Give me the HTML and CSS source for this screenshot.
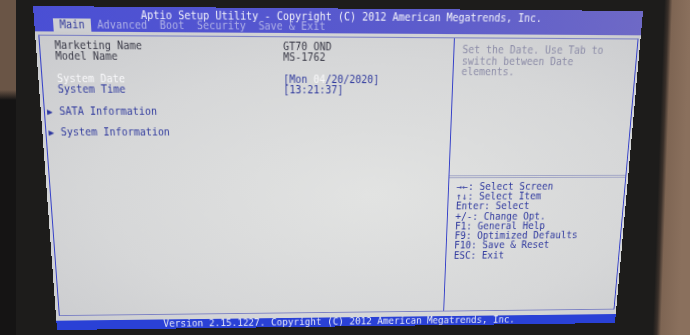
FILE: index.html
```html
<!DOCTYPE html>
<html lang="en">
<head>
    <meta charset="UTF-8">
    <meta name="viewport" content="width=device-width, initial-scale=1.0">
    <title>Aptio Setup Utility</title>
    <link rel="stylesheet" href="styles.css">
</head>
<body>
    <div class="screen">
        <header class="topbar">
            <div class="title">Aptio Setup Utility - Copyright (C) 2012 American Megatrends, Inc.</div>
            <nav class="tabs">
                <span class="tab active">Main</span>
                <span class="tab">Advanced</span>
                <span class="tab">Boot</span>
                <span class="tab">Security</span>
                <span class="tab">Save &amp; Exit</span>
            </nav>
        </header>
        <main class="panel">
            <div class="frame">
                <section class="items">
                    <div class="row dark"><span class="arrow"></span><span>Marketing Name</span><span>GT70 OND</span></div>
                    <div class="row dark"><span class="arrow"></span><span>Model Name</span><span>MS-1762</span></div>
                    <div class="row"></div>
                    <div class="row"><span class="arrow"></span><span class="selected">System Date</span><span>[Mon <span class="selected">04</span>/20/2020]</span></div>
                    <div class="row"><span class="arrow"></span><span>System Time</span><span>[13:21:37]</span></div>
                    <div class="row"></div>
                    <div class="row"><span class="arrow">▶</span><span>SATA Information</span></div>
                    <div class="row"></div>
                    <div class="row"><span class="arrow">▶</span><span>System Information</span></div>
                </section>
                <aside class="help">
                    <div class="help-text">
                        <div>Set the Date. Use Tab to</div>
                        <div>switch between Date</div>
                        <div>elements.</div>
                    </div>
                    <div class="keys">
                        <div>→←: Select Screen</div>
                        <div>↑↓: Select Item</div>
                        <div>Enter: Select</div>
                        <div>+/-: Change Opt.</div>
                        <div>F1: General Help</div>
                        <div>F9: Optimized Defaults</div>
                        <div>F10: Save &amp; Reset</div>
                        <div>ESC: Exit</div>
                    </div>
                </aside>
            </div>
        </main>
        <footer class="footer">Version 2.15.1227. Copyright (C) 2012 American Megatrends, Inc.</footer>
    </div>
</body>
</html>
```

FILE: styles.css
```css
body {
    margin: 0;
    width: 690px;
    height: 335px;
    overflow: hidden;
    background:
        linear-gradient(92deg, transparent 0 664px, #3a302a 668px, #7e6553 672px, #8a705d 690px),
        linear-gradient(to bottom, #6a5546 0 90px, #151414 100px),
        #1d1c1b;
    background-size: 100% 100%, 16px 100%, auto;
    background-repeat: no-repeat;
}

/* the BIOS screen: a 100 x 31 cell text grid, shot at an angle */
.screen {
    width: 600px;
    height: 320px;
    display: flex;
    flex-direction: column;
    font-family: "DejaVu Sans Mono", "Liberation Mono", monospace;
    font-size: 9.96px;
    line-height: 10.32px;
    white-space: nowrap;
    transform-origin: 0 0;
    transform: matrix3d(1.060173, 0.009078, 0, 0.00006766, 0.091963, 1.110703, 0, 0.00029758, 0, 0, 1, 0, 33, 6, 0, 1);
}

.topbar {
    height: 22.9px;
    flex-shrink: 0;
    background: linear-gradient(to right, #4a4fd4, #5b5bcc 60%, #6e69c6);
}

.title {
    height: 10.9px;
    line-height: 16.4px;
    text-align: center;
    color: #f2f2fa;
}

.tabs {
    display: flex;
    padding-left: 18px;
    height: 12px;
    line-height: 12px;
}

.tab {
    padding: 0 6px;
    color: #aeb0e6;
}

.tab.active {
    background-color: #cdced2;
    color: #343c9c;
}

.panel {
    height: 286.7px;
    flex-shrink: 0;
    box-sizing: border-box;
    padding: 3.2px 2.5px 4.7px;
    background: radial-gradient(ellipse at 55% 55%, #e2e3e2, #d6d7d8 60%, #c9cacd);
}

.frame {
    height: 100%;
    box-sizing: border-box;
    border: 1px solid #3540c8;
    border-top-color: #7d82c4;
    border-bottom-color: #7d82c4;
    display: grid;
    grid-template-columns: 407px 1fr;
}

.items {
    border-right: 1px solid #3540c8;
    padding: 3.86px 0 0 2.5px;
    color: #323c9e;
}

.row {
    display: grid;
    grid-template-columns: 12px 222px auto;
    height: 10.32px;
}

.arrow {
    font-size: 9px;
    color: #2c36a0;
}

.row.dark {
    color: #3b3b48;
}

.selected {
    color: #f8f8fa;
}

.help-text {
    height: 130.2px;
    box-sizing: border-box;
    padding: 6.36px 0 0 8.5px;
    color: #8d8da8;
}

.keys {
    margin-top: 3.66px;
    border-top: 3px double #a2a6c6;
    padding: 3.66px 0 0 8.5px;
    color: #2e389e;
}

.footer {
    height: 10.32px;
    flex-shrink: 0;
    text-align: center;
    background-color: #2a41d6;
    color: #e6e8f6;
}
```
